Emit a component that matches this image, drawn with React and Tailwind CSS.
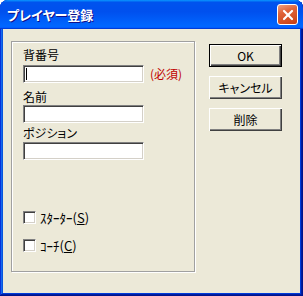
import { X } from "lucide-react";

const jp = { fontFamily: '"Noto Sans CJK JP", "Noto Sans", sans-serif' };

const Field = ({ children, cursor }) => (
  <div className="w-[121px] h-[18px] bg-white border border-t-[#808080] border-l-[#808080] border-b-white border-r-white shadow-[inset_1px_1px_0_#404040,inset_-1px_-1px_0_#D4D0C8] flex items-center">
    {cursor && <div className="ml-[2px] w-px h-[12px] bg-black" />}
    {children}
  </div>
);

const Check = ({ children }) => (
  <div className="flex items-center h-[13px]">
    <div className="w-[13px] h-[13px] bg-white border border-t-[#808080] border-l-[#808080] border-b-white border-r-white shadow-[inset_1px_1px_0_#404040,inset_-1px_-1px_0_#D4D0C8]" />
    <span className="ml-[4px] text-[13px] leading-[13px] text-black">{children}</span>
  </div>
);

const Btn = ({ children, def }) => (
  <button
    className={
      "w-[73px] h-[23px] bg-[#ECE9D8] text-[12px] leading-[16px] text-black flex items-center justify-center " +
      (def
        ? "border border-black shadow-[inset_1px_1px_0_white,inset_-1px_-1px_0_#404040,inset_-2px_-2px_0_#808080]"
        : "shadow-[inset_1px_1px_0_white,inset_-1px_-1px_0_#404040,inset_-2px_-2px_0_#808080]")
    }
  >
    {children}
  </button>
);

export default function App() {
  return (
    <div
      style={jp}
      className="w-[303px] h-[296px] flex flex-col bg-[#0831d9] rounded-t-[8px] shadow-[inset_-1px_-1px_#00138c,inset_1px_1px_#0831d9,inset_-2px_-2px_#001ea0,inset_2px_2px_#166aee,inset_-3px_-3px_#003bda,inset_3px_3px_#0855dd] [font-feature-settings:'palt']"
    >
      <div className="h-[29px] shrink-0 rounded-t-[8px] bg-[linear-gradient(180deg,#0997ff,#0053ee_8%,#0050ee_40%,#0066ff_88%,#0066ff_93%,#005bff_95%,#003dd7_96%,#003dd7)] flex items-center pl-[7px] pr-[5px]">
        <span className="text-white font-bold text-[13px] leading-[16px] [text-shadow:1px_1px_#0f1089]">
          プレイヤー登録
        </span>
        <div className="ml-auto w-[21px] h-[21px] rounded-[3px] border border-white bg-[linear-gradient(160deg,#F0A080_0%,#E0643A_35%,#D24E22_75%,#C43C14_100%)] flex items-center justify-center">
          <X size={16} strokeWidth={3.2} color="white" />
        </div>
      </div>
      <div className="flex-1 mx-[3px] mb-[3px] bg-[#ECE9D8] flex items-start">
        <div className="ml-[8px] mt-[12px] w-[184px] h-[231px] border border-[#A0A0A0] shadow-[inset_1px_1px_0_white,1px_1px_0_white] pl-[11px] pt-[5px] flex flex-col text-black">
          <div className="h-[16px] text-[12px] leading-[16px]">背番号</div>
          <div className="mt-[2px] flex items-center">
            <Field cursor />
            <span className="ml-[6px] text-[12px] leading-[16px] text-[#C00000]">(必須)</span>
          </div>
          <div className="mt-[6px] h-[16px] text-[12px] leading-[16px]">名前</div>
          <div>
            <Field />
          </div>
          <div className="mt-[2px] h-[16px] text-[12px] leading-[16px]">ポジション</div>
          <div className="mt-[1px]">
            <Field />
          </div>
          <div className="mt-[51px]">
            <Check>
              ｽﾀｰﾀｰ(<span className="underline">S</span>)
            </Check>
          </div>
          <div className="mt-[15px]">
            <Check>
              ｺｰﾁ(<span className="underline">C</span>)
            </Check>
          </div>
        </div>
        <div className="ml-[14px] mt-[15px] flex flex-col gap-[9px]">
          <Btn def>OK</Btn>
          <Btn>キャンセル</Btn>
          <Btn>削除</Btn>
        </div>
      </div>
    </div>
  );
}
